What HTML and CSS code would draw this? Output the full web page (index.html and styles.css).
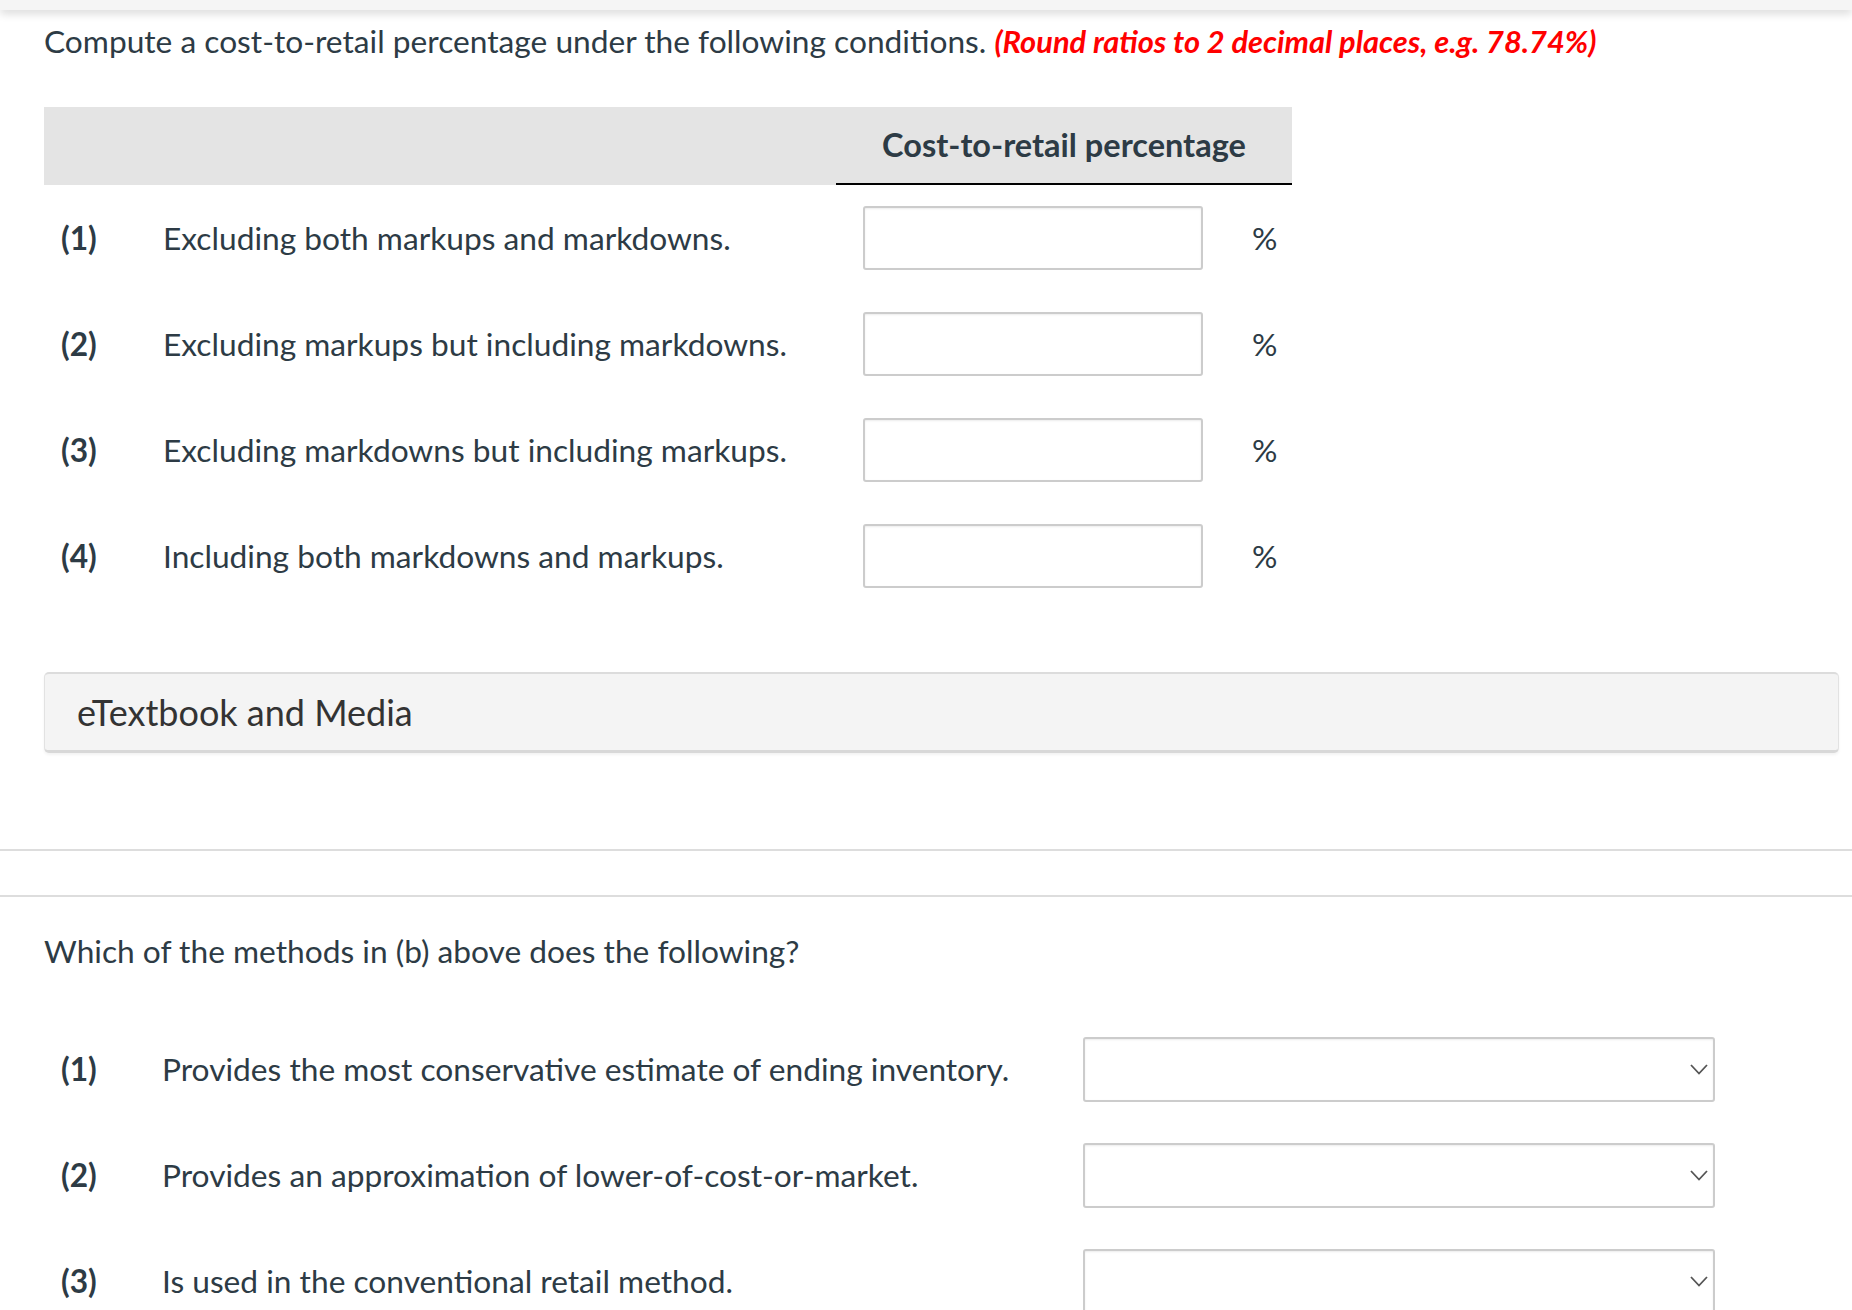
FILE: index.html
```html
<!DOCTYPE html>
<html lang="en">
<head>
<meta charset="utf-8">
<title>Cost-to-retail percentage</title>
<link rel="stylesheet" href="styles.css">
</head>
<body>
<div class="topbar"></div>
<main class="content">
  <p class="prompt">Compute a cost-to-retail percentage under the following conditions. <em class="hint">(Round ratios to 2 decimal places, e.g. 78.74%)</em></p>
  <div class="table">
    <div class="thead">
      <div class="th-blank"></div>
      <div class="th-col">Cost-to-retail percentage</div>
    </div>
    <div class="row">
      <span class="num">(1)</span>
      <span class="desc">Excluding both markups and markdowns.</span>
      <div class="cell"><input class="pct" type="text"><span class="unit">%</span></div>
    </div>
    <div class="row">
      <span class="num">(2)</span>
      <span class="desc">Excluding markups but including markdowns.</span>
      <div class="cell"><input class="pct" type="text"><span class="unit">%</span></div>
    </div>
    <div class="row">
      <span class="num">(3)</span>
      <span class="desc">Excluding markdowns but including markups.</span>
      <div class="cell"><input class="pct" type="text"><span class="unit">%</span></div>
    </div>
    <div class="row">
      <span class="num">(4)</span>
      <span class="desc">Including both markdowns and markups.</span>
      <div class="cell"><input class="pct" type="text"><span class="unit">%</span></div>
    </div>
  </div>
  <div class="media">eTextbook and Media</div>
</main>
<div class="divider"></div>
<section class="content part">
  <p class="prompt">Which of the methods in (b) above does the following?</p>
  <div class="srow">
    <span class="num">(1)</span>
    <span class="desc">Provides the most conservative estimate of ending inventory.</span>
    <div class="selwrap"><select class="sel"><option></option></select><svg class="chev" viewBox="0 0 18 11" width="18" height="11"><path d="M1 1 L9 9.5 L17 1" fill="none" stroke="#555" stroke-width="1.8"/></svg></div>
  </div>
  <div class="srow">
    <span class="num">(2)</span>
    <span class="desc">Provides an approximation of lower-of-cost-or-market.</span>
    <div class="selwrap"><select class="sel"><option></option></select><svg class="chev" viewBox="0 0 18 11" width="18" height="11"><path d="M1 1 L9 9.5 L17 1" fill="none" stroke="#555" stroke-width="1.8"/></svg></div>
  </div>
  <div class="srow">
    <span class="num">(3)</span>
    <span class="desc">Is used in the conventional retail method.</span>
    <div class="selwrap"><select class="sel"><option></option></select><svg class="chev" viewBox="0 0 18 11" width="18" height="11"><path d="M1 1 L9 9.5 L17 1" fill="none" stroke="#555" stroke-width="1.8"/></svg></div>
  </div>
</section>
</body>
</html>
```

FILE: styles.css
```css
html, body {
  margin: 0;
  padding: 0;
  background: #fff;
}
body {
  font-family: "Lato", "Liberation Sans", sans-serif;
  color: #2d3b45;
  font-size: 31.7px;
  line-height: 36px;
  overflow: hidden;
}
.topbar {
  height: 10px;
  background: #f5f5f5;
  box-shadow: 0 4px 8px rgba(0, 0, 0, 0.14);
  position: relative;
}
.content {
  padding-left: 44px;
}
.prompt {
  margin: 13px 0 0 0;
  height: 36px;
}
.hint {
  color: #ff0000;
  font-weight: 700;
  font-style: italic;
  font-size: 30.8px;
  line-height: 1;
}
.table {
  width: 1248px;
  margin-top: 48px;
}
.thead {
  display: grid;
  grid-template-columns: 792px 456px;
  background: #e4e4e4;
}
.th-col {
  font-weight: 700;
  font-size: 32.5px;
  text-align: center;
  line-height: 76px;
  border-bottom: 2px solid #000;
  height: 76px;
}
.th-blank {
  background: #e4e4e4;
  box-shadow: 0 2px 0 #fff;
}
.row {
  display: grid;
  grid-template-columns: 119px 673px 456px;
  height: 106px;
  align-items: center;
}
.num {
  font-weight: 700;
  padding-left: 17px;
}
.cell {
  display: flex;
  align-items: center;
  padding-left: 27px;
}
.pct {
  box-sizing: border-box;
  width: 340px;
  height: 64px;
  border: 2px solid #cccccc;
  border-radius: 3px;
  box-shadow: inset 0 1px 2px rgba(0, 0, 0, 0.08);
  background: #fff;
  margin: 0;
  padding: 0 10px;
  font: inherit;
}
.unit {
  margin-left: 49px;
}
.media {
  margin-top: 63px;
  width: 1795px;
  box-sizing: border-box;
  height: 81px;
  background: #f4f4f4;
  border: 1px solid #e2e2e2;
  border-top: 2px solid #dcdcdc;
  border-bottom: 3px solid #d8d8d8;
  border-radius: 5px;
  box-shadow: 0 2px 3px rgba(0, 0, 0, 0.05);
  color: #333;
  font-size: 36px;
  padding-left: 32px;
  display: flex;
  align-items: center;
}
.divider {
  margin-top: 96px;
  height: 44px;
  border-top: 2px solid #dddddd;
  border-bottom: 2px solid #dddddd;
}
.part .prompt {
  margin-top: 36px;
}
.srow {
  display: grid;
  grid-template-columns: 118px 921px 632px;
  height: 106px;
  align-items: center;
}
.part .prompt + .srow {
  margin-top: 47px;
}
.selwrap {
  position: relative;
  width: 632px;
  height: 65px;
}
.sel {
  -webkit-appearance: none;
  appearance: none;
  box-sizing: border-box;
  width: 632px;
  height: 65px;
  border: 2px solid #cccccc;
  border-radius: 3px;
  box-shadow: inset 0 1px 2px rgba(0, 0, 0, 0.08);
  background: #fff;
  margin: 0;
  font: inherit;
}
.chev {
  position: absolute;
  right: 7px;
  top: 27px;
}
```
